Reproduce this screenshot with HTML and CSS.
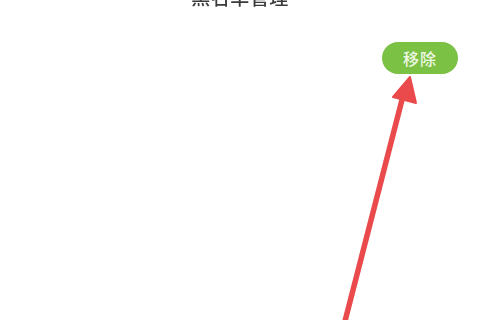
FILE: index.html
```html
<!DOCTYPE html>
<html lang="zh">
<head>
<meta charset="utf-8">
<link rel="stylesheet" href="styles.css">
</head>
<body>
<div class="page">
  <header class="titlebar"><h1 class="title">黑名单管理</h1></header>
  <div class="actions"><button class="remove">移除</button></div>
  <svg class="arrow" width="480" height="320" viewBox="0 0 480 320">
    <line x1="344" y1="325" x2="403" y2="96" stroke="#ea4a4c" stroke-width="5.5" stroke-linecap="round"/>
    <polygon points="410,77 393,97 416,103" fill="#ea4a4c" stroke="#ea4a4c" stroke-width="2" stroke-linejoin="round"/>
  </svg>
</div>
</body>
</html>
```
FILE: styles.css
```css
html, body {
  margin: 0;
  padding: 0;
  background: #ffffff;
}
.page {
  position: relative;
  width: 480px;
  height: 320px;
  overflow: hidden;
  font-family: "Noto Sans CJK SC", "Noto Sans", sans-serif;
}
.titlebar {
  display: flex;
  justify-content: center;
  margin-top: -13px;
  height: 20px;
}
.title {
  margin: 0;
  font-size: 19px;
  line-height: 19px;
  font-weight: 500;
  color: #3a3a3a;
  letter-spacing: 0.5px;
  filter: blur(0.4px);
}
.actions {
  display: flex;
  justify-content: flex-end;
  padding-right: 22px;
  margin-top: 35px;
}
.remove {
  width: 76px;
  height: 32px;
  border: none;
  border-radius: 16px;
  background: #7bc143;
  color: #eef7e4;
  font-family: "Noto Sans CJK SC", sans-serif;
  font-size: 16px;
  font-weight: 500;
  letter-spacing: 1px;
  padding: 0;
}
.arrow {
  position: absolute;
  left: 0;
  top: 0;
}
```
